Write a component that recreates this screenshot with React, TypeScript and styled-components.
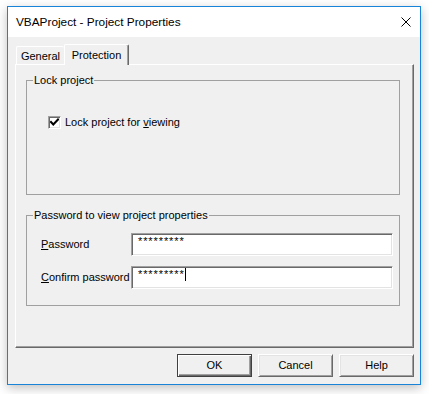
import React from 'react';
import styled, { createGlobalStyle } from 'styled-components';

const Global = createGlobalStyle`
  html, body { margin: 0; padding: 0; background: #ffffff; }
  body {
    font-family: "Liberation Sans", Arial, sans-serif;
    font-size: 11px;
    color: #000;
  }
  * { box-sizing: border-box; }
`;

const Page = styled.div`
  width: 429px;
  height: 394px;
  padding: 6px 0 0 7px;
`;

const Window = styled.div`
  width: 414px;
  height: 379px;
  border: 1px solid #1883d7;
  box-shadow: 0 3px 10px rgba(0, 0, 0, 0.25);
  background: #f0f0f0;
  display: flex;
  flex-direction: column;
`;

const TitleBar = styled.div`
  height: 30px;
  background: #ffffff;
  display: flex;
  align-items: center;
  justify-content: space-between;
  padding: 0 9px 0 8px;
  flex: none;
`;

const Title = styled.span`
  font-size: 11.8px;
  line-height: 14px;
  color: #000;
`;

const Body = styled.div`
  flex: 1;
  padding: 7px 6px 7px 7px;
  display: flex;
  flex-direction: column;
`;

const TabRow = styled.div`
  height: 20px;
  display: flex;
  align-items: flex-start;
  padding-left: 1px;
`;

const Tab = styled.div<{ $active?: boolean }>`
  position: relative;
  z-index: 2;
  height: ${p => (p.$active ? '21px' : '18px')};
  margin-top: ${p => (p.$active ? '0' : '2px')};
  width: ${p => (p.$active ? '65px' : '48px')};
  padding-top: ${p => (p.$active ? '0' : '2px')};
  background: #f0f0f0;
  border-top: 1px solid #ffffff;
  border-left: 1px solid #ffffff;
  border-right: ${p => (p.$active ? '1px solid #696969' : 'none')};
  box-shadow: ${p => (p.$active ? 'inset -1px 0 0 #a0a0a0' : 'none')};
  border-radius: 2px 2px 0 0;
  display: flex;
  align-items: center;
  justify-content: center;
  line-height: 13px;
`;

const Panel = styled.div`
  height: 284px;
  border-top: 1px solid #ffffff;
  border-left: 1px solid #ffffff;
  border-right: 1px solid #696969;
  border-bottom: 1px solid #696969;
  box-shadow: inset -1px -1px 0 #a0a0a0;
  padding: 9px 0 0 10px;
  display: flex;
  flex-direction: column;
  gap: 14px;
`;

const Group = styled.fieldset<{ $h: number }>`
  width: 374px;
  height: ${p => p.$h}px;
  margin: 0;
  padding: 0;
  border: 1px solid #a0a0a0;
  min-inline-size: 0;
`;

const Legend = styled.legend`
  margin-left: 6px;
  padding: 0 1px;
  line-height: 13px;
  font-size: 11px;
`;

const CheckArea = styled.div`
  padding: 29px 0 0 21px;
`;

const CheckRow = styled.label`
  display: flex;
  align-items: center;
  gap: 4px;
  line-height: 13px;
`;

const CheckBox = styled.span`
  width: 13px;
  height: 13px;
  flex: none;
  background: #ffffff;
  border-top: 1px solid #a0a0a0;
  border-left: 1px solid #a0a0a0;
  border-right: 1px solid #ffffff;
  border-bottom: 1px solid #ffffff;
  box-shadow: inset 1px 1px 0 #696969, inset -1px -1px 0 #e3e3e3;
  display: flex;
  align-items: center;
  justify-content: center;
`;

const FieldGrid = styled.div`
  display: grid;
  grid-template-columns: 90px 262px;
  row-gap: 10px;
  align-items: center;
  padding: 11px 0 0 14px;
`;

const FieldLabel = styled.span`
  line-height: 13px;
  white-space: nowrap;
`;

const TextBox = styled.div`
  height: 23px;
  background: #ffffff;
  border-top: 1px solid #a0a0a0;
  border-left: 1px solid #a0a0a0;
  border-right: 1px solid #ffffff;
  border-bottom: 1px solid #ffffff;
  box-shadow: inset 1px 1px 0 #696969, inset -1px -1px 0 #e3e3e3;
  padding: 1px 0 0 6px;
  line-height: 13px;
  letter-spacing: 0.9px;
  white-space: nowrap;
`;

const Caret = styled.span`
  display: inline-block;
  width: 1px;
  height: 13px;
  background: #000;
  vertical-align: top;
  margin-left: 0px;
`;

const ButtonRow = styled.div`
  display: flex;
  justify-content: flex-end;
  gap: 6px;
  margin-top: 6px;
`;

const Button = styled.button<{ $default?: boolean }>`
  width: 75px;
  height: 23px;
  margin: 0;
  padding: 0;
  font-family: "Liberation Sans", Arial, sans-serif;
  font-size: 11px;
  color: #000;
  background: #f0f0f0;
  border: 1px solid ${p => (p.$default ? '#404040' : '#ffffff')};
  border-right-color: ${p => (p.$default ? '#404040' : '#696969')};
  border-bottom-color: ${p => (p.$default ? '#404040' : '#696969')};
  box-shadow: ${p =>
    p.$default
      ? 'inset 1px 1px 0 #ffffff, inset -1px -1px 0 #696969, inset -2px -2px 0 #a0a0a0'
      : 'inset 1px 1px 0 #e3e3e3, inset -1px -1px 0 #a0a0a0'};
  line-height: 13px;
`;

const CloseIcon = () => (
  <svg width="10" height="10" viewBox="0 0 10 10">
    <path d="M0.5 0.5 L9.5 9.5 M9.5 0.5 L0.5 9.5" stroke="#000" strokeWidth="1" fill="none" />
  </svg>
);

const CheckMark = () => (
  <svg width="9" height="9" viewBox="0 0 9 9">
    <polyline points="1,4 3.3,6.5 8,1.5" stroke="#000" strokeWidth="2" fill="none" strokeLinecap="square" />
  </svg>
);

export default function App() {
  return (
    <>
      <Global />
      <Page>
        <Window>
          <TitleBar>
            <Title>VBAProject - Project Properties</Title>
            <CloseIcon />
          </TitleBar>
          <Body>
            <TabRow>
              <Tab>General</Tab>
              <Tab $active>Protection</Tab>
            </TabRow>
            <Panel>
              <Group $h={121}>
                <Legend>Lock project</Legend>
                <CheckArea>
                  <CheckRow>
                    <CheckBox>
                      <CheckMark />
                    </CheckBox>
                    <span>
                      Lock project for <u>v</u>iewing
                    </span>
                  </CheckRow>
                </CheckArea>
              </Group>
              <Group $h={97}>
                <Legend>Password to view project properties</Legend>
                <FieldGrid>
                  <FieldLabel>
                    <u>P</u>assword
                  </FieldLabel>
                  <TextBox>*********</TextBox>
                  <FieldLabel>
                    <u>C</u>onfirm password
                  </FieldLabel>
                  <TextBox>
                    *********
                    <Caret />
                  </TextBox>
                </FieldGrid>
              </Group>
            </Panel>
            <ButtonRow>
              <Button $default>OK</Button>
              <Button>Cancel</Button>
              <Button>Help</Button>
            </ButtonRow>
          </Body>
        </Window>
      </Page>
    </>
  );
}
